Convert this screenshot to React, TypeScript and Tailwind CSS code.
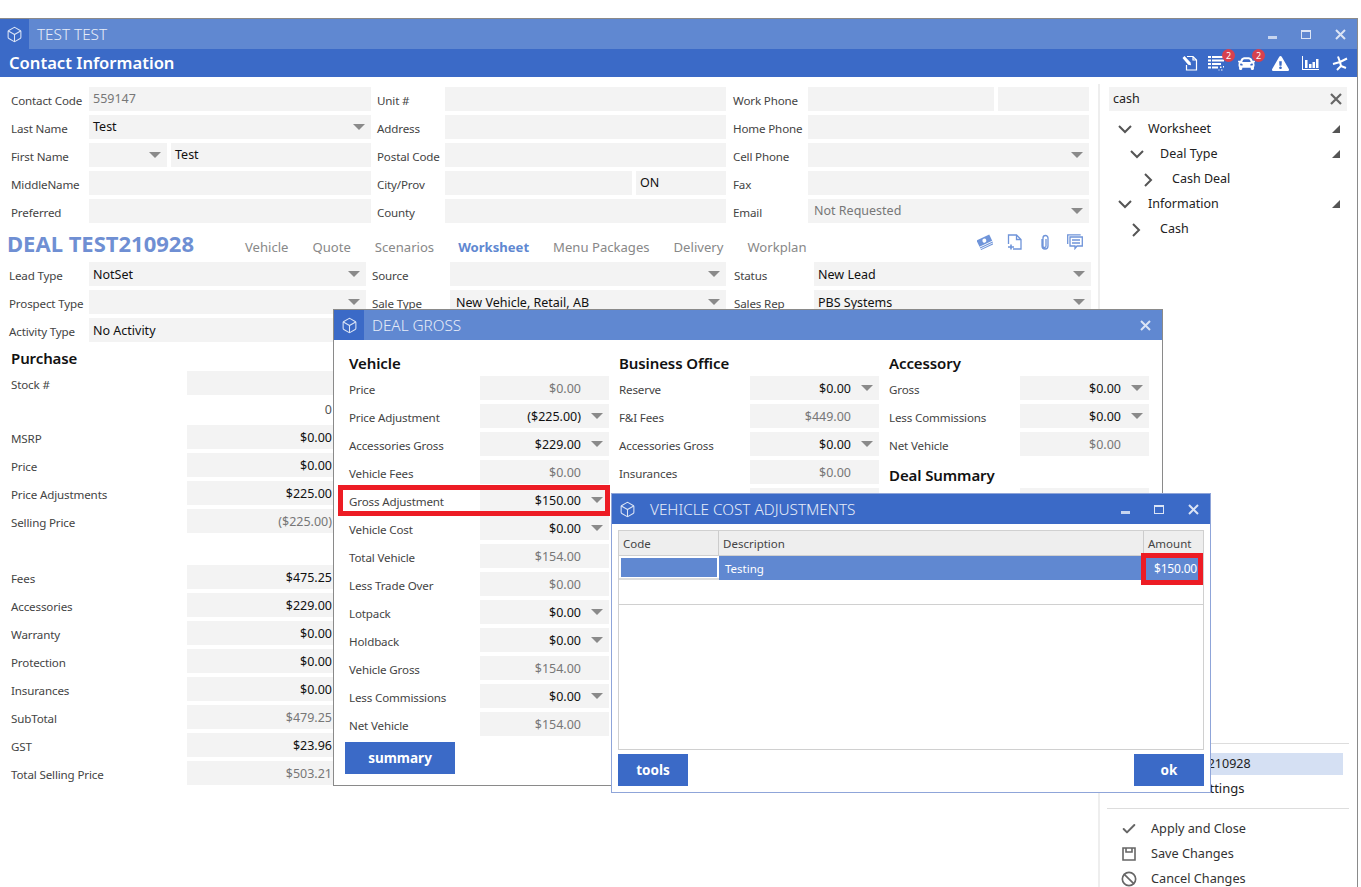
import React from "react";
import { Box, Check, Ban } from "lucide-react";
import { FaCar, FaExclamationTriangle } from "react-icons/fa";

const Caret = () => (
  <svg className="absolute right-[6px] top-1/2 -translate-y-1/2" width="12" height="6" viewBox="0 0 12 6"><polygon points="0,0 12,0 6,6" fill="#8a8a8a" /></svg>
);

function Field({ w, value, muted, caret, right, pr, inset, low }: { w: string; value?: string; muted?: boolean; caret?: boolean; right?: boolean; pr?: string; inset?: boolean; low?: boolean }) {
  return (
    <div className={`${w} relative h-6 shrink-0 bg-[#f3f3f3] flex items-center text-[12.5px] ${right ? "justify-end pt-[2px]" : low ? "pt-[3px]" : "pt-[1px]"} ${right ? "" : inset ? "pl-[6px]" : "pl-1"} ${pr ?? ""} ${muted ? "text-[#777]" : "text-[#111]"}`}>
      <span className="whitespace-nowrap">{value}</span>
      {caret && <Caret />}
    </div>
  );
}

const Label = ({ w, ml, children }: { w: string; ml?: string; children?: React.ReactNode }) => (
  <div className={`${w} ${ml ?? ""} shrink-0 h-6 pt-[4px] flex items-center text-[11.6px] tracking-[-0.15px] text-[#444] whitespace-nowrap`}>{children}</div>
);

const WinControls = ({ single }: { single?: boolean }) => (
  <div className="ml-auto flex h-full items-center text-[#d3def3]">
    {!single && (
      <>
        <div className="w-[34px] flex justify-center pt-[7px]"><div className="w-[9px] h-[3px] bg-[#c7d5ef]" /></div>
        <div className="w-[34px] flex justify-center"><div className="w-[10px] h-[9px] border border-t-[2px] border-[#dbe4f5]" /></div>
      </>
    )}
    <div className="w-[34px] flex justify-center">
      <svg width="11" height="11" viewBox="0 0 11 11"><path d="M1 1l9 9M10 1l-9 9" stroke="#dbe4f5" strokeWidth="2" /></svg>
    </div>
  </div>
);

const Chevron = ({ open }: { open?: boolean }) =>
  open ? (
    <svg width="14" height="9" viewBox="0 0 14 9" className="shrink-0"><path d="M1 1l6 6 6-6" fill="none" stroke="#555" strokeWidth="2" /></svg>
  ) : (
    <svg width="9" height="14" viewBox="0 0 9 14" className="shrink-0"><path d="M1 1l6 6-6 6" fill="none" stroke="#555" strokeWidth="2" /></svg>
  );

const Corner = () => (
  <svg width="8" height="8" viewBox="0 0 8 8" className="absolute right-[17px] top-[8px]"><polygon points="8,0 8,8 0,8" fill="#555" /></svg>
);

function TreeRow({ text, open, pl, gap, corner }: { text: string; open?: boolean; pl: string; gap: string; corner?: boolean }) {
  return (
    <div className={`relative h-[25px] flex items-center ${pl} text-[12.5px] text-[#222]`}>
      <div className={`${gap} flex shrink-0 ${open ? "" : "pl-[2px]"}`}><Chevron open={open} /></div>
      <span>{text}</span>
      {corner && <Corner />}
    </div>
  );
}

const Badge = () => (
  <div className="absolute -top-[6px] left-[14px] w-[13px] h-[13px] rounded-full bg-[#d8414f] text-white text-[9px] leading-[13px] text-center">2</div>
);

const HeaderIcons = () => (
  <div className="ml-auto flex items-center h-full pr-[8px] text-white">
    <svg width="16" height="16" viewBox="0 0 16 16" className="mr-[10px]" fill="none" stroke="white" strokeWidth="1.2">
      <path d="M5 1.5h6l3.5 3.5v10H4.5v-5M11 1.5V5h3.5" />
      <path d="M.5 3 2.5 1l6 6.4.6 2.9-2.9-.6z" fill="white" stroke="none" />
    </svg>
    <div className="relative mr-[14px]">
      <svg width="16" height="16" viewBox="0 0 16 16" fill="white">
        <rect x="0" y="1" width="3" height="2" /><rect x="4" y="1" width="12" height="2" />
        <rect x="0" y="4.5" width="3" height="2" /><rect x="4" y="4.5" width="12" height="2" />
        <rect x="0" y="8" width="3" height="2" /><rect x="4" y="8" width="9" height="2" />
        <rect x="0" y="11.5" width="3" height="2" /><rect x="4" y="11.5" width="6" height="2" />
        <rect x="12" y="11.5" width="1.5" height="1.5" /><rect x="15" y="11" width="1" height="1.5" /><rect x="13" y="14.5" width="1.5" height="1" /><rect x="10.5" y="14.5" width="1" height="1" />
      </svg>
      <Badge />
    </div>
    <div className="relative mr-[17px]">
      <FaCar size={17} color="white" />
      <Badge />
    </div>
    <FaExclamationTriangle size={17} color="white" className="mr-[13px]" />
    <svg width="17" height="16" viewBox="0 0 17 16" className="mr-[13px]" fill="white">
      <rect x="0" y="1" width="1" height="14" /><rect x="0" y="14" width="17" height="1" />
      <rect x="3" y="5" width="2.5" height="8" /><rect x="7" y="9" width="2.5" height="4" /><rect x="10.5" y="7" width="2.5" height="6" /><rect x="14" y="4" width="2.5" height="9" />
    </svg>
    <svg width="17" height="16" viewBox="0 0 17 16" fill="none" stroke="white" strokeWidth="2">
      <path d="M6 1.5 8 7l7-3.5M8 7 1 9M8 7l1 4-4 4M9 11l5 2" />
    </svg>
  </div>
);

const DealIcons = () => (
  <div className="ml-auto mr-[15px] flex items-center gap-[14px] mb-[10px]">
    <svg width="16" height="16" viewBox="0 0 16 16">
      <g transform="rotate(-25 8 8)" fill="#6f94d9">
        <rect x="1" y="3" width="14" height="7" />
        <rect x="1" y="10.8" width="14" height="1" />
        <rect x="1" y="12.6" width="14" height="1" />
        <circle cx="8" cy="6.5" r="2" fill="white" />
      </g>
    </svg>
    <svg width="16" height="16" viewBox="0 0 16 16" fill="none" stroke="#6f94d9" strokeWidth="1.3">
      <path d="M1.5 10V1h8L14 5.5V15H6M9.5 1v4.5H14" />
      <path d="M4 10.5v5M1 13h6" strokeWidth="1.6" />
    </svg>
    <svg width="16" height="16" viewBox="0 0 16 16" fill="none" stroke="#6f94d9" strokeWidth="1.3">
      <path d="M5 5v7a3 3 0 0 0 6 0V4a2.5 2.5 0 0 0-5 0v8a1.5 1.5 0 0 0 3 0V5" />
    </svg>
    <svg width="16" height="16" viewBox="0 0 16 16" fill="none" stroke="#6f94d9" strokeWidth="1.3">
      <path d="M.7 10V.8h13" />
      <path d="M3 3h12.3v9H10l-2 2.5V12H3zM5 6h8M5 9h8" />
    </svg>
  </div>
);

const purchase: [string, string, boolean?][] = [
  ["MSRP", "$0.00"],
  ["Price", "$0.00"],
  ["Price Adjustments", "$225.00"],
  ["Selling Price", "($225.00)", true],
];
const purchase2: [string, string, boolean?][] = [
  ["Fees", "$475.25"],
  ["Accessories", "$229.00"],
  ["Warranty", "$0.00"],
  ["Protection", "$0.00"],
  ["Insurances", "$0.00"],
  ["SubTotal", "$479.25", true],
  ["GST", "$23.96"],
  ["Total Selling Price", "$503.21", true],
];

type G = [string, string, "m" | "c"];
const vehicle: G[] = [
  ["Price", "$0.00", "m"],
  ["Price Adjustment", "($225.00)", "c"],
  ["Accessories Gross", "$229.00", "c"],
  ["Vehicle Fees", "$0.00", "m"],
  ["Gross Adjustment", "$150.00", "c"],
  ["Vehicle Cost", "$0.00", "c"],
  ["Total Vehicle", "$154.00", "m"],
  ["Less Trade Over", "$0.00", "m"],
  ["Lotpack", "$0.00", "c"],
  ["Holdback", "$0.00", "c"],
  ["Vehicle Gross", "$154.00", "m"],
  ["Less Commissions", "$0.00", "c"],
  ["Net Vehicle", "$154.00", "m"],
];
const business: G[] = [
  ["Reserve", "$0.00", "c"],
  ["F&I Fees", "$449.00", "m"],
  ["Accessories Gross", "$0.00", "c"],
  ["Insurances", "$0.00", "m"],
  ["", "", "m"],
];
const accessory: G[] = [
  ["Gross", "$0.00", "c"],
  ["Less Commissions", "$0.00", "c"],
  ["Net Vehicle", "$0.00", "m"],
];

const GrossRows = ({ rows }: { rows: G[] }) => (
  <div className="flex flex-col gap-1">
    {rows.map(([l, v, k], i) => (
      <div key={i} className="flex">
        <Label w="w-[131px]">{l}</Label>
        <Field w="w-[129px]" value={v} right pr="pr-[28px]" muted={k === "m"} caret={k === "c"} />
      </div>
    ))}
  </div>
);

const Heading = ({ children, h }: { children: React.ReactNode; h: string }) => (
  <div className={`${h} flex items-end pb-[2px] text-[15px] tracking-[-0.1px] font-semibold text-[#111]`}>{children}</div>
);

const Btn = ({ children, w }: { children: React.ReactNode; w: string }) => (
  <div className={`${w} h-8 pt-[1px] bg-[#3b6ac7] text-white font-bold text-[13.5px] flex items-center justify-center`}>{children}</div>
);

export default function App() {
  return (
    <div className="relative w-[1361px] h-[887px] overflow-hidden bg-white font-['Noto_Sans',sans-serif] pt-[18px]">
      <div className="w-[1358px] h-[900px] border-t border-r border-[#8a8a8a] flex flex-col">
        <div className="h-[30px] shrink-0 bg-[#6088d1] flex items-center">
          <div className="w-[29px] h-full bg-[#3b6ac7] flex items-center justify-center"><Box size={17} strokeWidth={1.5} color="#dbe4f5" /></div>
          <div className="ml-2 text-[15.3px] font-light text-[#e6ecf8]">TEST TEST</div>
          <WinControls />
        </div>
        <div className="h-7 shrink-0 bg-[#3b6ac7] flex items-center pl-[9px]">
          <div className="text-[16.6px] font-semibold text-white pt-[1px]">Contact Information</div>
          <HeaderIcons />
        </div>
        <div className="flex flex-1">
          <main className="w-[1098px] shrink-0">
            <div className="pt-[10px] pl-[11px] flex flex-col gap-1">
              <div className="flex">
                <Label w="w-[78px]">Contact Code</Label><Field w="w-[282px]" value="559147" muted />
                <Label w="w-[68px]" ml="ml-[6px]">Unit #</Label><Field w="w-[281px]" />
                <Label w="w-[75px]" ml="ml-[7px]">Work Phone</Label><Field w="w-[186px]" /><Field w="w-[91px] ml-1" />
              </div>
              <div className="flex">
                <Label w="w-[78px]">Last Name</Label><Field w="w-[282px]" value="Test" caret />
                <Label w="w-[68px]" ml="ml-[6px]">Address</Label><Field w="w-[281px]" />
                <Label w="w-[75px]" ml="ml-[7px]">Home Phone</Label><Field w="w-[281px]" />
              </div>
              <div className="flex">
                <Label w="w-[78px]">First Name</Label><Field w="w-[78px]" caret /><Field w="w-[200px] ml-1" value="Test" />
                <Label w="w-[68px]" ml="ml-[6px]">Postal Code</Label><Field w="w-[281px]" />
                <Label w="w-[75px]" ml="ml-[7px]">Cell Phone</Label><Field w="w-[281px]" caret />
              </div>
              <div className="flex">
                <Label w="w-[78px]">MiddleName</Label><Field w="w-[282px]" />
                <Label w="w-[68px]" ml="ml-[6px]">City/Prov</Label><Field w="w-[187px]" /><Field w="w-[90px] ml-1" value="ON" />
                <Label w="w-[75px]" ml="ml-[7px]">Fax</Label><Field w="w-[281px]" />
              </div>
              <div className="flex">
                <Label w="w-[78px]">Preferred</Label><Field w="w-[282px]" />
                <Label w="w-[68px]" ml="ml-[6px]">County</Label><Field w="w-[281px]" />
                <Label w="w-[75px]" ml="ml-[7px]">Email</Label><Field w="w-[281px]" value="Not Requested" muted caret inset />
              </div>
            </div>
            <div className="h-[39px] flex items-end pl-[7px] pb-[2px]">
              <div className="w-[238px] text-[22px] font-bold text-[#6f8fd3] leading-[30px] whitespace-nowrap mb-[2px]">DEAL TEST210928</div>
              <div className="flex gap-6 text-[13.1px] text-[#888] pb-[2px]">
                <span>Vehicle</span><span>Quote</span><span>Scenarios</span>
                <span className="font-bold text-[#6088d1]">Worksheet</span>
                <span>Menu Packages</span><span>Delivery</span><span>Workplan</span>
              </div>
              <DealIcons />
            </div>
            <div className="pl-[9px] flex flex-col gap-1">
              <div className="flex">
                <Label w="w-[80px]">Lead Type</Label><Field w="w-[277px]" value="NotSet" caret low />
                <Label w="w-[78px]" ml="ml-[6px]">Source</Label><Field w="w-[276px]" caret />
                <Label w="w-[80px]" ml="ml-[8px]">Status</Label><Field w="w-[277px]" value="New Lead" caret low />
              </div>
              <div className="flex">
                <Label w="w-[80px]">Prospect Type</Label><Field w="w-[277px]" caret />
                <Label w="w-[78px]" ml="ml-[6px]">Sale Type</Label><Field w="w-[276px]" value="New Vehicle, Retail, AB" caret inset low />
                <Label w="w-[80px]" ml="ml-[8px]">Sales Rep</Label><Field w="w-[277px]" value="PBS Systems" caret low />
              </div>
              <div className="flex">
                <Label w="w-[80px]">Activity Type</Label><Field w="w-[277px]" value="No Activity" low />
              </div>
            </div>
            <div className="pl-[11px]">
              <div className="h-[29px] flex items-end pb-[2px] text-[15px] tracking-[-0.1px] font-semibold text-[#111]">Purchase</div>
              <div className="flex flex-col gap-1">
                <div className="flex"><Label w="w-[176px]">Stock #</Label><Field w="w-[146px]" /></div>
                <div className="flex h-[22px] items-center"><div className="w-[176px]" /><div className="w-[146px] text-right pr-[1px] text-[12.5px] text-[#555]">0</div></div>
                {purchase.map(([l, v, m]) => (
                  <div key={l} className="flex"><Label w="w-[176px]">{l}</Label><Field w="w-[146px]" value={v} muted={m} right pr="pr-[1px]" /></div>
                ))}
                <div className="h-6" />
                {purchase2.map(([l, v, m]) => (
                  <div key={l} className="flex"><Label w="w-[176px]">{l}</Label><Field w="w-[146px]" value={v} muted={m} right pr="pr-[1px]" /></div>
                ))}
              </div>
            </div>
          </main>
          <aside className="w-[259px] mt-[7px] border-l-2 border-[#eeeeee] flex flex-col">
            <div className="ml-[9px] mr-[10px] mt-[3px] h-6 bg-[#f3f3f3] flex items-center justify-between pl-1 pr-[5px] text-[12.5px] text-[#222]">
              <span>cash</span>
              <svg width="12" height="12" viewBox="0 0 12 12"><path d="M1 1l10 10M11 1 1 11" stroke="#666" strokeWidth="2.2" /></svg>
            </div>
            <div className="mt-[6px]">
              <TreeRow text="Worksheet" open pl="pl-[18px]" gap="w-[30px]" corner />
              <TreeRow text="Deal Type" open pl="pl-[30px]" gap="w-[30px]" corner />
              <TreeRow text="Cash Deal" pl="pl-[42px]" gap="w-[30px]" />
              <TreeRow text="Information" open pl="pl-[18px]" gap="w-[30px]" corner />
              <TreeRow text="Cash" pl="pl-[30px]" gap="w-[30px]" />
            </div>
            <div className="mt-[501px] ml-[7px] w-[242px] border-t border-[#dddddd]" />
            <div className="mt-[9px] ml-[7px] w-[236px] h-[22px] bg-[#d5e0f3] flex items-center pl-[73px] text-[12.5px] text-[#222] whitespace-nowrap">TEST210928</div>
            <div className="h-[28px] ml-[7px] flex items-center pl-[88px] text-[13px] text-[#222]">Settings</div>
            <div className="mt-[5px] ml-[7px] w-[242px] border-t border-[#dddddd]" />
            <div className="mt-[7px] flex flex-col text-[12.7px] text-[#333]">
              <div className="h-[25px] flex items-center pl-[21px] gap-[14px]"><Check size={16} strokeWidth={3} color="#666" /><span>Apply and Close</span></div>
              <div className="h-[25px] flex items-center pl-[21px] gap-[14px]">
                <svg width="16" height="16" viewBox="0 0 16 16" fill="none" stroke="#666" strokeWidth="1.6"><path d="M2 2h12v12H2zM5 2v4h6V2" /></svg>
                <span>Save Changes</span>
              </div>
              <div className="h-[25px] flex items-center pl-[21px] gap-[14px]"><Ban size={16} strokeWidth={2.5} color="#666" /><span>Cancel Changes</span></div>
            </div>
          </aside>
        </div>
      </div>

      {/* Deal Gross dialog */}
      <div className="absolute left-[333px] top-[309px] w-[830px] h-[477px] bg-white border border-[#8a8a8a] flex flex-col">
        <div className="h-[30px] shrink-0 bg-[#6088d1] flex items-center">
          <div className="w-[30px] h-full bg-[#3b6ac7] flex items-center justify-center"><Box size={17} strokeWidth={1.5} color="#dbe4f5" /></div>
          <div className="ml-2 text-[15.3px] font-light text-[#e6ecf8]">DEAL GROSS</div>
          <WinControls single />
        </div>
        <div className="flex pl-[15px] gap-[10px]">
          <div className="w-[260px]">
            <Heading h="h-[36px]">Vehicle</Heading>
            <GrossRows rows={vehicle} />
            <div className="mt-[6px] -ml-1"><Btn w="w-[110px]">summary</Btn></div>
          </div>
          <div className="w-[260px]">
            <Heading h="h-[36px]">Business Office</Heading>
            <GrossRows rows={business} />
          </div>
          <div className="w-[260px]">
            <Heading h="h-[36px]">Accessory</Heading>
            <GrossRows rows={accessory} />
            <Heading h="h-[32px]">Deal Summary</Heading>
            <GrossRows rows={[["", "", "m"]]} />
          </div>
        </div>
      </div>
      <div className="absolute left-[338px] top-[485px] w-[272px] h-[31px] border-[5px] border-[#ed1c24]" />

      {/* Vehicle cost adjustments dialog */}
      <div className="absolute left-[611px] top-[493px] w-[600px] h-[300px] bg-white border border-[#8fa5d9] flex flex-col">
        <div className="h-[30px] shrink-0 bg-[#3b6ac7] flex items-center">
          <div className="w-[30px] flex justify-center"><Box size={17} strokeWidth={1.5} color="#dbe4f5" /></div>
          <div className="ml-2 text-[15.3px] font-light text-[#e6ecf8]">VEHICLE COST ADJUSTMENTS</div>
          <WinControls />
        </div>
        <div className="mx-[6px] mt-[6px] h-[220px] border border-[#d0d0d0] flex flex-col text-[11.5px]">
          <div className="h-[25px] shrink-0 bg-[#eeeeee] border-b border-[#d0d0d0] flex text-[#444] items-center">
            <div className="w-[100px] h-full pl-1 pt-[2px] flex items-center border-r border-[#cccccc]">Code</div>
            <div className="w-[425px] h-full pl-1 pt-[2px] flex items-center border-r border-[#cccccc]">Description</div>
            <div className="pl-1 pt-[2px]">Amount</div>
          </div>
          <div className="h-[24px] shrink-0 bg-[#6088d1] flex items-center text-white">
            <div className="w-[100px] h-full bg-white">
              <div className="ml-[1px] mt-[1px] h-[21px] w-[98px] border border-white bg-[#6088d1]" />
              <div className="h-[2px] bg-[#dddddd]" />
            </div>
            <div className="w-[425px] pl-[6px] pt-[2px]">Testing</div>
            <div className="flex-1 text-right pr-[6px] pt-[1px] text-[12px] tracking-[-0.2px]">$150.00</div>
          </div>
          <div className="h-[25px] shrink-0 border-b border-[#d0d0d0]" />
        </div>
        <div className="mx-[6px] mt-1 flex justify-between">
          <Btn w="w-[70px]">tools</Btn>
          <Btn w="w-[70px]">ok</Btn>
        </div>
      </div>
      <div className="absolute left-[1141px] top-[553px] w-[62px] h-[32px] border-[5px] border-[#ed1c24]" />
    </div>
  );
}
